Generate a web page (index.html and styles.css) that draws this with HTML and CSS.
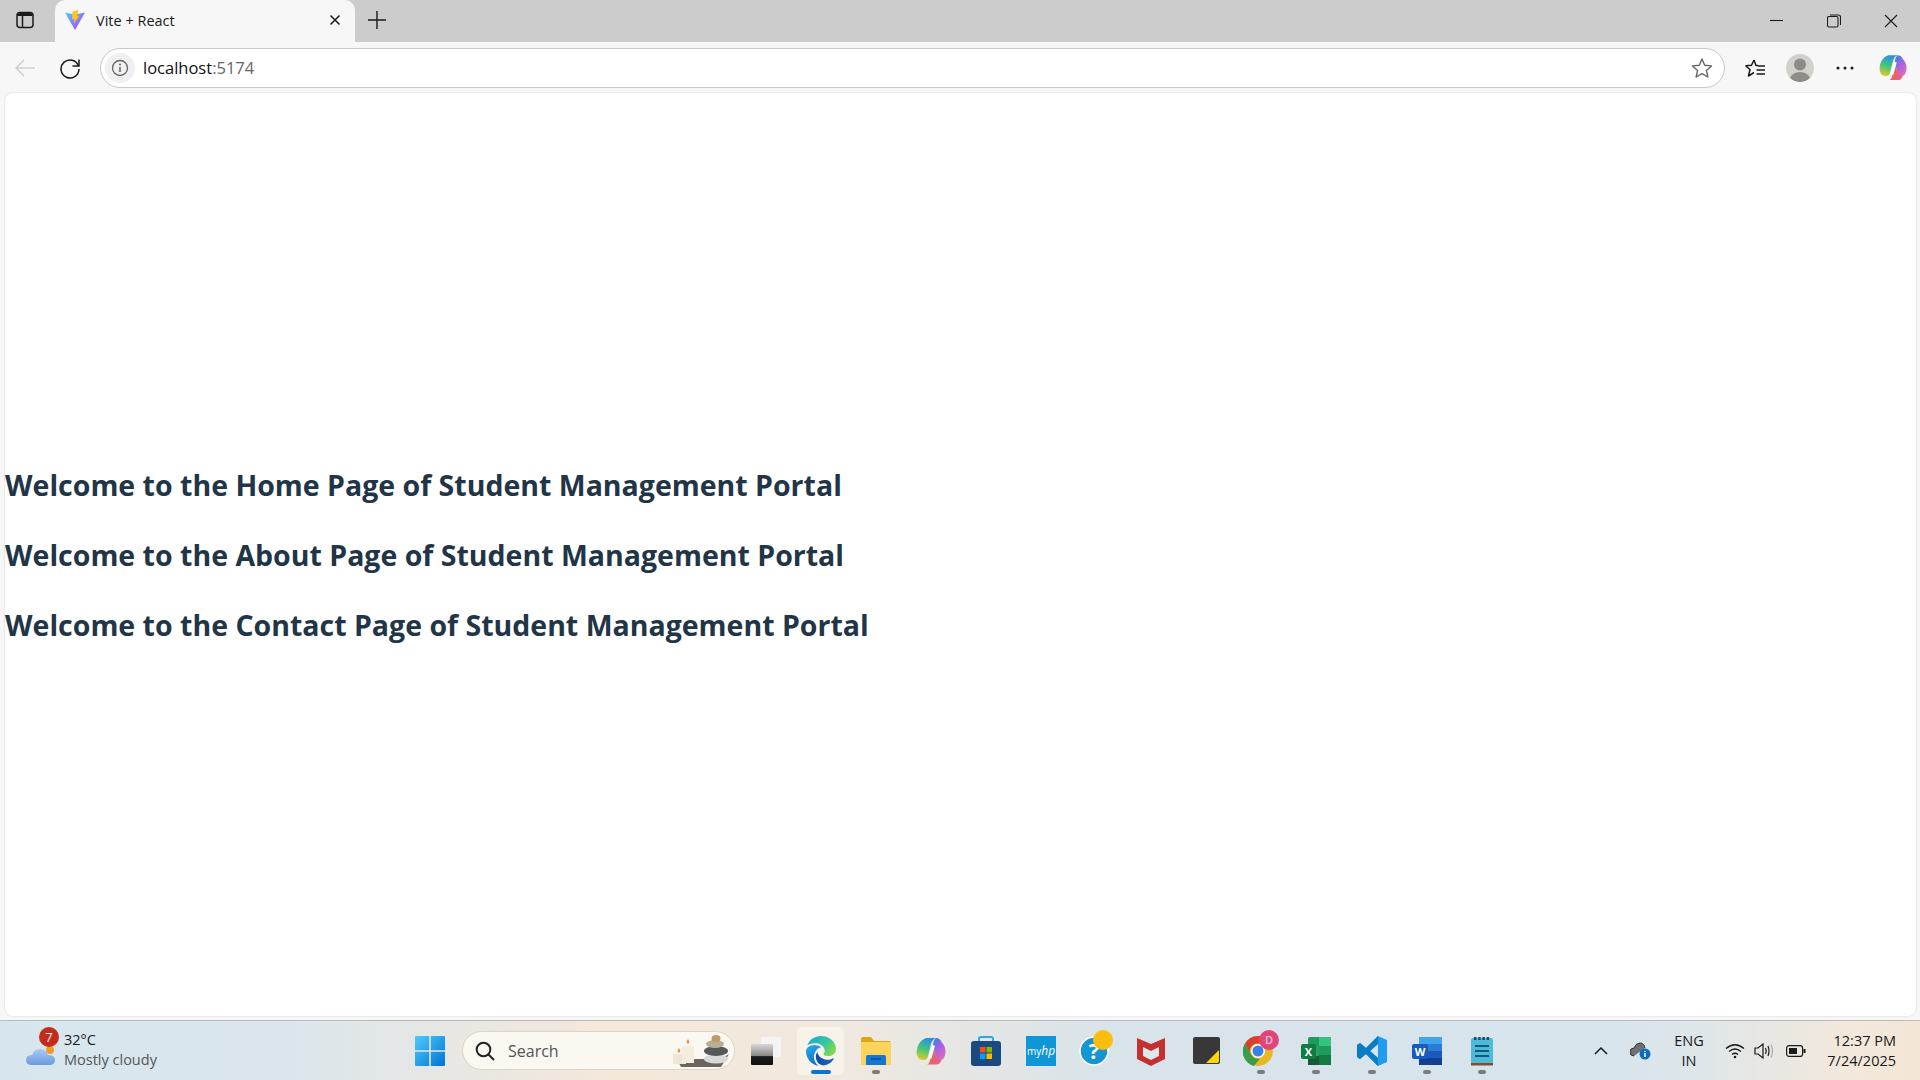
FILE: index.html
```html
<!DOCTYPE html>
<html lang="en">
<head>
  <meta charset="UTF-8" />
  <title>Vite + React</title>
  <link rel="stylesheet" href="styles.css">
</head>
<body>

  <!-- Tab strip -->
  <div class="tabstrip">
    <div class="sidebar-btn">
      <svg width="18" height="18" viewBox="0 0 18 18" fill="none" stroke="#1a1a1a" stroke-width="1.5"><rect x="1" y="1.5" width="16" height="15" rx="3"/><path d="M1.5 3.5Q2 2 4 2H14Q16 2 16.5 3.5V5H1.5Z" fill="#1a1a1a" stroke="none"/><path d="M6.5 5V16"/></svg>
    </div>
    <div class="tab">
      <svg width="20" height="20" viewBox="0 0 20 20"><defs><linearGradient id="viteA" x1="0" y1="0" x2="1" y2="1"><stop offset="0" stop-color="#41d1ff"/><stop offset="1" stop-color="#bd34fe"/></linearGradient></defs><path d="M0 2.5L10 4.5 20 2.5 10.3 19.5Q10 20 9.7 19.5Z" fill="url(#viteA)"/><path d="M13.5 0L7.5 1.5 7 9.5 9.5 9 9 13.5 14.5 5.5 12 6Z" fill="#ffc517"/></svg>
      <span class="tab-title">Vite + React</span>
      <svg class="tab-close" width="12" height="12" viewBox="0 0 12 12" stroke="#1a1a1a" stroke-width="1.5"><path d="M1.5 1.5L10.5 10.5M10.5 1.5L1.5 10.5"/></svg>
    </div>
    <div class="newtab">
      <svg width="18" height="18" viewBox="0 0 18 18" stroke="#1a1a1a" stroke-width="1.4"><path d="M9 0V18M0 9H18"/></svg>
    </div>
    <div class="window-btns">
      <svg width="14" height="14" viewBox="0 0 14 14" stroke="#1a1a1a" stroke-width="1.1"><path d="M0 6.5H13"/></svg>
      <svg width="14" height="14" viewBox="0 0 14 14" fill="none" stroke="#1a1a1a" stroke-width="1.1"><rect x="0.5" y="2.5" width="10.5" height="10.5" rx="1.5"/><path d="M3 1H11.5Q13.5 1 13.5 3V11"/></svg>
      <svg width="14" height="14" viewBox="0 0 14 14" stroke="#1a1a1a" stroke-width="1.1"><path d="M1 1L13 13M13 1L1 13"/></svg>
    </div>
  </div>

  <!-- Toolbar -->
  <div class="toolbar">
    <div class="nav-btn">
      <svg width="22" height="20" viewBox="0 0 22 20" fill="none" stroke="#cfcfcf" stroke-width="1.5"><path d="M21 10H2M10 2L2 10L10 18"/></svg>
    </div>
    <div class="nav-btn">
      <svg width="22" height="22" viewBox="0 0 22 22" fill="none" stroke="#1a1a1a" stroke-width="1.5"><path d="M19.5 9A9 9 0 1 0 20 12"/><path d="M20 2.5V9H13.5"/></svg>
    </div>
    <div class="addressbar">
      <div class="site-info">
        <svg width="18" height="18" viewBox="0 0 18 18" fill="none" stroke="#666" stroke-width="1.3"><circle cx="9" cy="9" r="7.5"/><path d="M9 8V13" stroke-width="1.6"/><circle cx="9" cy="5.4" r="1" fill="#666" stroke="none"/></svg>
      </div>
      <span class="url">localhost<span class="url-port">:5174</span></span>
      <svg class="fav-star" width="22" height="22" viewBox="0 0 22 22" fill="none" stroke="#666" stroke-width="1.4" stroke-linejoin="round"><path d="M11 2L13.7 8.2 20.5 8.9 15.4 13.4 16.9 20 11 16.6 5.1 20 6.6 13.4 1.5 8.9 8.3 8.2Z"/></svg>
    </div>
    <div class="toolbar-icons">
      <svg class="ti-fav" width="22" height="20" viewBox="0 0 22 20" fill="none" stroke="#1a1a1a" stroke-width="1.5" stroke-linejoin="round"><path d="M10 2L12 7.5H14M1.5 7.7L7.5 7.3 10 2M1.5 7.7L6 11.5 4.5 18 10 14.5"/><path d="M14 8H21M12.5 12H21M12.5 16H21"/></svg>
      <div class="avatar">
        <svg width="28" height="28" viewBox="0 0 28 28"><circle cx="14" cy="10.5" r="6" fill="#8f8b87"/><path d="M4 24.5Q6 18 14 18T24 24.5Q20 28 14 28T4 24.5Z" fill="#8f8b87"/></svg>
      </div>
      <svg class="ti-more" width="18" height="4" viewBox="0 0 18 4" fill="#1a1a1a"><circle cx="2" cy="2" r="1.5"/><circle cx="9" cy="2" r="1.5"/><circle cx="16" cy="2" r="1.5"/></svg>
      <svg class="ti-copilot" width="28" height="27" viewBox="0 0 30 28">
        <defs>
          <linearGradient id="copA" x1="0.5" y1="0" x2="0.2" y2="1"><stop offset="0" stop-color="#2a8ee8"/><stop offset="0.5" stop-color="#45c77a"/><stop offset="1" stop-color="#e8c928"/></linearGradient>
          <linearGradient id="copB" x1="0.2" y1="0" x2="0.8" y2="1"><stop offset="0" stop-color="#3c7fe6"/><stop offset="0.45" stop-color="#a862e0"/><stop offset="1" stop-color="#e56bb8"/></linearGradient>
          <linearGradient id="copC" x1="0" y1="0" x2="1" y2="1"><stop offset="0" stop-color="#f0643c"/><stop offset="1" stop-color="#e85f90"/></linearGradient>
          <symbol id="copilot" viewBox="0 0 30 28">
            <path d="M10 1H20Q16.5 2 15 7L12 19Q11 23.5 7 23H6Q1 22.5 0.5 15 1.5 4 10 1Z" fill="url(#copA)"/>
            <path d="M20 1Q24 1 25.5 5 29.5 9 29.5 15 29 22 25 23H21L17 10Q17 3 20 1Z" fill="url(#copB)"/>
            <path d="M11 27.5H20Q24 27.5 25.5 23 22 23.5 20.5 20L17.5 12 13.5 25Q12.8 27 11 27.5Z" fill="url(#copC)"/>
            <path d="M15.8 8.5H19L15.5 21.5H12.5Z" fill="#fff"/>
          </symbol>
        </defs>
        <use href="#copilot"/>
      </svg>
    </div>
  </div>

  <!-- Page content -->
  <div class="viewport">
    <main class="page">
      <h2>Welcome to the Home Page of Student Management Portal</h2>
      <h2>Welcome to the About Page of Student Management Portal</h2>
      <h2>Welcome to the Contact Page of Student Management Portal</h2>
    </main>
  </div>

  <!-- Taskbar -->
  <footer class="taskbar">
    <div class="weather">
      <div class="weather-icon">
        <svg width="32" height="24" viewBox="0 0 32 24"><defs><linearGradient id="cloudA" x1="0" y1="0" x2="0" y2="1"><stop offset="0" stop-color="#a9c8f2"/><stop offset="1" stop-color="#6a9be0"/></linearGradient></defs><circle cx="25" cy="6" r="4" fill="#f09a2c"/><path d="M7 21Q1 21 1 16T7 11Q9 5 15 5T23 11Q30 11 30 16T24 21Z" fill="url(#cloudA)"/></svg>
        <span class="weather-badge">7</span>
      </div>
      <div class="weather-text">
        <div class="temp">32°C</div>
        <div class="cond">Mostly cloudy</div>
      </div>
    </div>

    <div class="task-center">
      <div class="start">
        <svg width="30" height="30" viewBox="0 0 30 30"><defs><linearGradient id="winA" x1="0" y1="0" x2="1" y2="1"><stop offset="0" stop-color="#4fcbfb"/><stop offset="1" stop-color="#0273d4"/></linearGradient></defs><path d="M1 0H14.2V14.2H0V1Q0 0 1 0ZM15.8 0H29Q30 0 30 1V14.2H15.8ZM0 15.8H14.2V30H1Q0 30 0 29ZM15.8 15.8H30V29Q30 30 29 30H15.8Z" fill="url(#winA)"/></svg>
      </div>
      <div class="searchbox">
        <svg width="20" height="20" viewBox="0 0 20 20" fill="none" stroke="#222" stroke-width="2"><circle cx="8.5" cy="8.5" r="6.8"/><path d="M13.5 13.5L19 19"/></svg>
        <span class="search-label">Search</span>
        <svg class="search-art" width="60" height="34" viewBox="0 0 60 34"><path d="M6 24H50L58 19 50 32H10Z" fill="#6b675c"/><rect x="2" y="19" width="13" height="10" fill="#efe7d6"/><rect x="11" y="11" width="12" height="17" fill="#f4ecdc"/><path d="M8 13l1.5 3-1.5 2-1.5-2ZM17 4l1.5 3-1.5 2-1.5-2Z" fill="#ee8a35"/><ellipse cx="45" cy="24" rx="12" ry="4.5" fill="#d9d9d6"/><ellipse cx="45" cy="16" rx="12" ry="5" fill="#55595c"/><ellipse cx="44" cy="9" rx="9" ry="4" fill="#b9ad97"/><ellipse cx="45" cy="3.5" rx="4.5" ry="3.5" fill="#c09a63"/></svg>
      </div>

      <div class="task-item">
        <svg width="30" height="30" viewBox="0 0 30 30"><defs><linearGradient id="tvA" x1="0" y1="0" x2="0" y2="1"><stop offset="0" stop-color="#d8d8d8"/><stop offset="0.55" stop-color="#8a8a8a"/><stop offset="0.6" stop-color="#1c1c1c"/><stop offset="1" stop-color="#111"/></linearGradient></defs><rect x="10" y="1" width="20" height="20" rx="1" fill="#f4f4f2"/><rect x="0" y="8" width="22" height="21" rx="1" fill="url(#tvA)"/></svg>
      </div>
      <div class="task-item active">
        <svg width="30" height="30" viewBox="0 0 24 24">
          <defs>
            <linearGradient id="edgeA" x1="0" y1="0" x2="1" y2="0.6"><stop offset="0" stop-color="#1aa5d8"/><stop offset="0.6" stop-color="#35c6a0"/><stop offset="1" stop-color="#7fd84e"/></linearGradient>
            <linearGradient id="edgeB" x1="0.3" y1="0" x2="0.7" y2="1"><stop offset="0" stop-color="#27a5ea"/><stop offset="1" stop-color="#0d6fc4"/></linearGradient>
            <linearGradient id="edgeC" x1="0" y1="0" x2="1" y2="0.5"><stop offset="0" stop-color="#0c4a94"/><stop offset="1" stop-color="#1565b8"/></linearGradient>
          </defs>
          <path fill="url(#edgeC)" d="M21.86 17.86q.14 0 .25.12.1.13.1.25t-.11.33l-.32.46-.43.53-.44.5q-.21.25-.38.42l-.22.23q-.58.53-1.34 1.04-.76.51-1.6.91-.86.4-1.74.64t-1.67.24q-.9 0-1.69-.28-.8-.28-1.48-.78-.68-.5-1.22-1.17-.53-.66-.92-1.44-.38-.77-.58-1.6-.2-.83-.2-1.67 0-1 .32-1.96.33-.97.87-1.8.14.95.55 1.77.41.82 1.02 1.5.6.68 1.38 1.21.78.54 1.64.9.86.36 1.77.56.92.2 1.8.2 1.12 0 2.18-.24 1.06-.23 2.06-.72l.2-.1.2-.05z"/>
          <path fill="url(#edgeB)" d="M6.36 16.59q0 1.1.27 2.15.27 1.06.78 2.03.51.96 1.24 1.77.74.82 1.66 1.4-1.47-.2-2.8-.74-1.33-.55-2.48-1.37-1.15-.83-2.08-1.9-.92-1.07-1.58-2.33T.36 14.94Q0 13.54 0 12.06q0-.81.32-1.49.31-.68.83-1.23.53-.55 1.2-.96.66-.4 1.35-.66.74-.27 1.5-.39.78-.12 1.55-.12.7 0 1.42.1.72.12 1.4.35.68.23 1.32.57.63.35 1.16.83-.35 0-.7.07-.33.07-.65.23v-.02q-.63.28-1.2.74-.57.46-1.05 1.04-.48.58-.87 1.26-.38.67-.65 1.39-.27.71-.42 1.44-.15.72-.15 1.38z"/>
          <path fill="url(#edgeA)" d="M11.96.06q1.7 0 3.33.39 1.63.38 3.07 1.15 1.43.77 2.62 1.93 1.18 1.16 1.98 2.7.49.94.76 1.96.28 1 .28 2.08 0 .89-.23 1.7-.24.8-.69 1.48-.45.68-1.1 1.22-.64.53-1.45.88-.54.24-1.11.36-.58.13-1.16.13-.42 0-.97-.03-.54-.03-1.1-.12-.55-.09-1.05-.28-.5-.19-.84-.5-.12-.09-.23-.24-.1-.16-.1-.33 0-.15.16-.35.16-.2.35-.5.2-.28.36-.68.16-.4.16-.95 0-1.06-.4-1.96-.4-.91-1.06-1.64-.66-.74-1.52-1.28-.86-.55-1.79-.89-.84-.3-1.72-.44-.87-.14-1.76-.14-1.55 0-3.06.45T.94 7.55q.71-1.74 1.81-3.13 1.1-1.38 2.52-2.35Q6.68 1.1 8.37.58q1.7-.52 3.58-.52Z"/>
        </svg>
        <i class="run-mark active-mark"></i>
      </div>
      <div class="task-item">
        <svg width="30" height="28" viewBox="0 0 30 28"><path d="M0 2Q0 0 2 0H10L13 4H28Q30 4 30 6V10H0Z" fill="#dca614"/><rect x="0" y="5" width="30" height="23" fill="#fcd45c"/><path d="M5 20Q5 18 7 18H23Q25 18 25 20V28H5Z" fill="#1478d2"/><path d="M10 22H20" stroke="#0b4d94" stroke-width="1.5"/></svg>
        <i class="run-mark"></i>
      </div>
      <div class="task-item">
        <svg width="30" height="28" viewBox="0 0 30 28"><use href="#copilot"/></svg>
      </div>
      <div class="task-item">
        <svg width="30" height="30" viewBox="0 0 30 30"><path d="M8 7V3Q8 1 10 1H20Q22 1 22 3V7" fill="none" stroke="#2fa6e6" stroke-width="2"/><rect x="0" y="5" width="30" height="25" rx="3" fill="#1a4a80"/><rect x="9" y="11" width="5.5" height="5.5" fill="#f25022"/><rect x="15.5" y="11" width="5.5" height="5.5" fill="#7fba00"/><rect x="9" y="17.5" width="5.5" height="5.5" fill="#00a4ef"/><rect x="15.5" y="17.5" width="5.5" height="5.5" fill="#ffb900"/></svg>
      </div>
      <div class="task-item">
        <div class="myhp">my<em>hp</em></div>
      </div>
      <div class="task-item">
        <svg class="over-svg" width="34" height="36" viewBox="0 0 34 36"><circle cx="15" cy="21" r="14" fill="#1596d2" stroke="#fff" stroke-width="1.5"/><text x="15" y="29" text-anchor="middle" class="help-mark">?</text><circle cx="24" cy="10" r="10" fill="#fdbd0c"/></svg>
      </div>
      <div class="task-item">
        <svg width="28" height="30" viewBox="0 0 28 30"><path d="M0 2L14 8 28 2V23L14 30 0 23Z" fill="#c3302e"/><path d="M6 11L14 15 22 11V20L14 24 6 20Z" fill="#dfe6ec"/></svg>
      </div>
      <div class="task-item">
        <svg width="27" height="27" viewBox="0 0 27 27"><rect width="27" height="27" rx="2" fill="#383838"/><path d="M26 13V24Q26 26 24 26H13Z" fill="#ffd60a"/></svg>
      </div>
      <div class="task-item">
        <svg class="over-svg" width="36" height="36" viewBox="0 0 36 36"><circle cx="15" cy="21" r="15" fill="#e9b820"/><path d="M15 6A15 15 0 0 1 28 13.5H15A7.5 7.5 0 0 0 8 25L2 13.5A15 15 0 0 1 15 6Z" fill="#d8402f"/><path d="M2 13.5L8.5 25A7.5 7.5 0 0 0 17 28.5L11 36A15 15 0 0 1 2 13.5Z" fill="#3c9b4a"/><circle cx="15" cy="21" r="7" fill="#fff"/><circle cx="15" cy="21" r="5.5" fill="#3d7fe8"/><circle cx="26" cy="10" r="10" fill="#e2457c"/><text x="26" y="14" text-anchor="middle" class="badge-letter">D</text></svg>
        <i class="run-mark"></i>
      </div>
      <div class="task-item">
        <svg width="30" height="28" viewBox="0 0 30 28"><rect x="7" y="0" width="23" height="28" rx="2" fill="#1f9a5c"/><rect x="18" y="0" width="12" height="9" fill="#33c481"/><rect x="7" y="9" width="11" height="10" fill="#21a366"/><rect x="18" y="18" width="12" height="10" fill="#107c41"/><rect x="7" y="19" width="11" height="9" fill="#185c37"/><rect x="0" y="7" width="15" height="15" rx="2" fill="#107c41"/><text x="7.5" y="19" text-anchor="middle" class="office-letter">X</text></svg>
        <i class="run-mark"></i>
      </div>
      <div class="task-item">
        <svg width="30" height="30" viewBox="0 0 30 30"><path d="M21 0L30 4V26L21 30 9 18 3 23 0 21V9L3 7 9 12ZM21 8L13 15 21 22Z" fill="#1f9cf0"/><path d="M21 0L9 12 3 7 0 9V21L3 23 9 18 21 30V22L13 15 21 8Z" fill="#0a7cc2"/></svg>
        <i class="run-mark"></i>
      </div>
      <div class="task-item">
        <svg width="30" height="28" viewBox="0 0 30 28"><rect x="7" y="0" width="23" height="28" rx="2" fill="#2b7cd3"/><rect x="7" y="0" width="23" height="7" fill="#41a5ee"/><rect x="7" y="14" width="23" height="7" fill="#185abd"/><rect x="7" y="21" width="23" height="7" fill="#103f91"/><rect x="0" y="7" width="16" height="15" rx="2" fill="#185abd"/><text x="8" y="19" text-anchor="middle" class="office-letter">W</text></svg>
        <i class="run-mark"></i>
      </div>
      <div class="task-item">
        <svg width="22" height="30" viewBox="0 0 22 30"><rect x="0" y="2" width="22" height="26" rx="2" fill="#4dbbd8"/><rect x="0" y="27" width="22" height="2.5" fill="#8a4d1f"/><path d="M3 2.5H19" stroke="#16506a" stroke-width="3" stroke-dasharray="2.5 1.7"/><path d="M4 10H18M4 15H18M4 20H18" stroke="#125a78" stroke-width="1.8"/></svg>
        <i class="run-mark"></i>
      </div>
    </div>

    <div class="tray">
      <svg class="tray-chevron" width="14" height="8" viewBox="0 0 14 8" fill="none" stroke="#1a1a1a" stroke-width="1.5"><path d="M1 7L7 1 13 7"/></svg>
      <svg class="tray-cloud" width="21" height="18" viewBox="0 0 21 18"><path d="M4 14Q0 14 0 10T4 6Q6 1 10 1T15 6" fill="#6f7275" stroke="#333" stroke-width="1"/><circle cx="15" cy="12" r="5.5" fill="#0f6cbd"/><path d="M15 11V15M15 9V10" stroke="#fff" stroke-width="1.5"/></svg>
      <div class="lang">ENG<br>IN</div>
      <svg class="tray-wifi" width="20" height="16" viewBox="0 0 20 16" fill="none" stroke="#1a1a1a" stroke-width="1.3"><path d="M1 5.5Q10 -2 19 5.5M4 8.5Q10 3.5 16 8.5M7 11.5Q10 9 13 11.5"/><circle cx="10" cy="14" r="1.3" fill="#1a1a1a" stroke="none"/></svg>
      <svg class="tray-sound" width="20" height="16" viewBox="0 0 20 16" fill="none" stroke="#1a1a1a" stroke-width="1.2"><path d="M1 5H4L9 1V15L4 11H1Z"/><path d="M11.5 5Q13 8 11.5 11M14 3Q16 8 14 13"/><path d="M17 1.5Q20 8 17 14.5" stroke="#aaa"/></svg>
      <svg class="tray-battery" width="20" height="12" viewBox="0 0 20 12" fill="none" stroke="#1a1a1a" stroke-width="1.2"><rect x="0.6" y="0.6" width="16" height="10.8" rx="2.5"/><rect x="3" y="3" width="8" height="6" fill="#1a1a1a" stroke="none"/><path d="M18.5 4V8" stroke-width="2"/></svg>
      <div class="clock">12:37 PM<br>7/24/2025</div>
    </div>
  </footer>

</body>
</html>
```

FILE: styles.css
```css
html, body {
  margin: 0;
  padding: 0;
  height: 100%;
}

body {
  font-family: "Open Sans", "Noto Sans", sans-serif;
  background: #f7f7f7;
  color: #1a1a1a;
  display: flex;
  flex-direction: column;
  height: 1080px;
  overflow: hidden;
}

/* Tab strip */
.tabstrip {
  display: flex;
  align-items: center;
  height: 42px;
  background: #cccccc;
  flex-shrink: 0;
}

.sidebar-btn {
  width: 49px;
  margin-right: 6px;
  padding-bottom: 2px;
  display: flex;
  justify-content: center;
}

.tab {
  display: flex;
  align-items: center;
  width: 300px;
  height: 42px;
  box-sizing: border-box;
  padding: 0 14px 2px 10px;
  background: #f7f7f7;
  border-radius: 10px 10px 0 0;
}

.tab-title {
  margin-left: 11px;
  font-size: 14.5px;
  flex: 1;
}

.newtab {
  width: 44px;
  padding-bottom: 2px;
  display: flex;
  justify-content: center;
}

.window-btns {
  margin-left: auto;
  display: flex;
  gap: 43px;
  padding-right: 22px;
}

/* Toolbar */
.toolbar {
  display: flex;
  align-items: center;
  height: 51px;
  padding: 0 13px 0 2px;
  box-sizing: border-box;
  flex-shrink: 0;
}

.nav-btn {
  width: 45px;
  display: flex;
  justify-content: center;
}

.addressbar {
  flex: 1;
  height: 40px;
  margin-left: 8px;
  display: flex;
  align-items: center;
  box-sizing: border-box;
  padding: 0 11px 0 4px;
  background: #fff;
  border: 1px solid #c8c8c8;
  border-radius: 20px;
}

.site-info {
  width: 30px;
  height: 30px;
  border-radius: 50%;
  background: #f0f0f0;
  display: flex;
  align-items: center;
  justify-content: center;
}

.url {
  margin-left: 8px;
  font-size: 16.5px;
  color: #111;
  flex: 1;
}

.url-port {
  color: #666;
}

.toolbar-icons {
  display: flex;
  align-items: center;
  margin-left: 19px;
}

.ti-fav {
  margin-right: 20px;
}

.ti-more {
  margin: 0 25px 0 22px;
}

.avatar {
  width: 28px;
  height: 28px;
  border-radius: 50%;
  background: #d3d1ce;
  overflow: hidden;
}

/* Page */
.viewport {
  flex: 1;
  padding: 0 4px 4px 5px;
  min-height: 0;
  display: flex;
}

.page {
  flex: 1;
  padding-top: 2px;
  background: #fff;
  border-radius: 8px;
  box-shadow: 0 0 2px rgba(0, 0, 0, 0.18);
  display: flex;
  flex-direction: column;
  justify-content: center;
}

.page h2 {
  margin: 13.5px 0;
  font-size: 28.5px;
  line-height: 43px;
  font-weight: 700;
  color: #213547;
}

/* Taskbar */
.taskbar {
  display: flex;
  align-items: center;
  height: 60px;
  box-sizing: border-box;
  flex-shrink: 0;
  border-top: 1px solid #b9bcbd;
  background: linear-gradient(90deg, #d7e6ee 0%, #dbe6ec 15%, #f4e8da 32%, #f0e9df 44%, #d8e3ea 58%, #d8e4ec 84%, #dde6ea 88%, #f2e8dc 96%, #f4e6d6 100%);
}

.weather {
  width: 415px;
  flex-shrink: 0;
  display: flex;
  align-items: center;
  box-sizing: border-box;
  padding-left: 25px;
}

.weather-icon {
  position: relative;
  width: 32px;
  height: 24px;
  margin-top: 10px;
}

.weather-badge {
  position: absolute;
  left: 14px;
  top: -17px;
  width: 20px;
  height: 20px;
  border-radius: 50%;
  background: #c42b1c;
  color: #fff;
  font-size: 13px;
  line-height: 20px;
  text-align: center;
}

.weather-text {
  margin-left: 7px;
  margin-top: -2px;
  font-size: 14.5px;
  line-height: 20px;
}

.cond {
  color: #555;
}

.task-center {
  display: flex;
  align-items: center;
}

.start {
  display: flex;
  justify-content: center;
  width: 30px;
}

.searchbox {
  position: relative;
  display: flex;
  align-items: center;
  width: 273px;
  height: 39px;
  margin-left: 17px;
  box-sizing: border-box;
  padding-left: 12px;
  background: #fbf7f1;
  border: 1px solid #dcd3c6;
  border-radius: 20px;
}

.search-label {
  margin-left: 13px;
  font-size: 16px;
  color: #555;
}

.search-art {
  position: absolute;
  right: 3px;
  top: 3px;
}

.task-item {
  position: relative;
  width: 55.1px;
  height: 48px;
  display: flex;
  align-items: center;
  justify-content: center;
}

.searchbox + .task-item {
  margin-left: 3px;
}

.task-item.active::before {
  content: "";
  position: absolute;
  left: 4px;
  right: 4px;
  top: 0;
  bottom: 0;
  background: #f7f2ea;
  border-radius: 5px;
}

.task-item.active svg {
  position: relative;
}

.run-mark {
  position: absolute;
  left: 50%;
  bottom: 1px;
  width: 8px;
  height: 4px;
  margin-left: -4px;
  border-radius: 2px;
  background: #7b7b7b;
}

.active-mark {
  width: 20px;
  margin-left: -10px;
  background: #0a74d6;
}

.myhp {
  width: 30px;
  height: 30px;
  background: #0f96d6;
  color: #fff;
  font-size: 10px;
  line-height: 30px;
  text-align: center;
  white-space: nowrap;
  overflow: hidden;
}

.myhp em {
  font-size: 12px;
}

.over-svg {
  margin-top: -6px;
}

.help-mark {
  fill: #fff;
  font: 700 22px "Open Sans", sans-serif;
}

.badge-letter {
  fill: #f6c6d8;
  font: 600 11px "Open Sans", sans-serif;
}

.office-letter {
  fill: #fff;
  font: 700 11px "Open Sans", sans-serif;
}

/* System tray */
.tray {
  margin-left: auto;
  display: flex;
  align-items: center;
  padding-right: 24px;
}

.tray-chevron {
  margin-right: 22px;
}

.tray-cloud {
  margin-right: 23px;
}

.lang {
  width: 30px;
  margin-right: 21px;
  font-size: 14.5px;
  line-height: 20px;
  text-align: center;
}

.tray-wifi {
  margin-right: 9px;
}

.tray-sound {
  margin-right: 12px;
}

.clock {
  width: 84px;
  margin-left: 6px;
  font-size: 14.5px;
  line-height: 20px;
  text-align: right;
  white-space: nowrap;
}
```
